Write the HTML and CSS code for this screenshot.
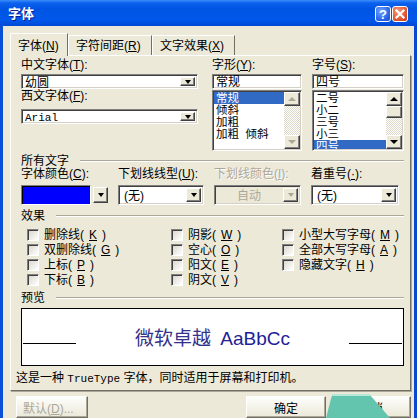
FILE: index.html
```html
<!DOCTYPE html>
<html lang="zh-CN">
<head>
  <meta charset="UTF-8">
  <title>字体</title>
  <link rel="stylesheet" href="styles.css">
</head>
<body>

  <div class="window">
    <!-- 标题栏 -->
    <div class="titlebar">
      <span class="title">字体</span>
      <span class="tbtn help">?</span>
      <span class="tbtn close">
        <svg width="14" height="14" viewBox="0 0 14 14"><path d="M3.5 3.5 L10.5 10.5 M10.5 3.5 L3.5 10.5" stroke="#fff" stroke-width="2.2" stroke-linecap="square"/></svg>
      </span>
    </div>

    <div class="frame">
      <div class="client">
        <div class="tabs">
          <div class="tab active">字体(<u>N</u>)</div>
          <div class="tab">字符间距(<u>R</u>)</div>
          <div class="tab">文字效果(<u>X</u>)</div>
        </div>

        <div class="sheet">
          <div class="top-grid">
            <div class="col">
              <div class="lbl">中文字体(<u>T</u>):</div>
              <div class="combo small"><span class="val">幼圆</span><i class="drop"></i></div>
              <div class="lbl l2">西文字体(<u>F</u>):</div>
              <div class="combo small west"><span class="val mono">Arial</span><i class="drop"></i></div>
            </div>
            <div class="col">
              <div class="lbl">字形(<u>Y</u>):</div>
              <div class="edit">常规</div>
              <div class="listbox">
                <ul>
                  <li class="sel">常规</li>
                  <li>倾斜</li>
                  <li>加粗</li>
                  <li>加粗&nbsp; 倾斜</li>
                </ul>
                <div class="vscroll off">
                  <span class="sbtn up"></span>
                  <span class="track"></span>
                  <span class="sbtn down"></span>
                </div>
              </div>
            </div>
            <div class="col">
              <div class="lbl">字号(<u>S</u>):</div>
              <div class="edit">四号</div>
              <div class="listbox">
                <ul>
                  <li>二号</li>
                  <li>小二</li>
                  <li>三号</li>
                  <li>小三</li>
                  <li class="sel">四号</li>
                </ul>
                <div class="vscroll">
                  <span class="sbtn up"></span>
                  <span class="thumb"></span>
                  <span class="track"></span>
                  <span class="sbtn down"></span>
                </div>
              </div>
            </div>
          </div>

          <div class="group">所有文字</div>
          <div class="row4">
            <div class="lbl">字体颜色(<u>C</u>):</div>
            <div class="lbl">下划线线型(<u>U</u>):</div>
            <div class="lbl dis">下划线颜色(<u>I</u>):</div>
            <div class="lbl">着重号(<u>·</u>):</div>

            <div class="colorpick"><span class="swatch"></span><i class="drop"></i></div>
            <div class="combo big"><span class="val">(无)</span><i class="drop"></i></div>
            <div class="combo big disabled"><span class="val">自动</span><i class="drop"></i></div>
            <div class="combo big"><span class="val">(无)</span><i class="drop"></i></div>
          </div>

          <div class="group g2">效果</div>
          <div class="checks">
            <label class="chk"><i class="box"></i>删除线(<u>K</u>)</label>
            <label class="chk"><i class="box"></i>双删除线(<u>G</u>)</label>
            <label class="chk"><i class="box"></i>上标(<u>P</u>)</label>
            <label class="chk"><i class="box"></i>下标(<u>B</u>)</label>
            <label class="chk"><i class="box"></i>阴影(<u>W</u>)</label>
            <label class="chk"><i class="box"></i>空心(<u>O</u>)</label>
            <label class="chk"><i class="box"></i>阳文(<u>E</u>)</label>
            <label class="chk"><i class="box"></i>阴文(<u>V</u>)</label>
            <label class="chk"><i class="box"></i>小型大写字母(<u>M</u>)</label>
            <label class="chk"><i class="box"></i>全部大写字母(<u>A</u>)</label>
            <label class="chk"><i class="box"></i>隐藏文字(<u>H</u>)</label>
          </div>

          <div class="group g2">预览</div>
          <div class="preview">
            <span class="pline"></span>
            <span class="ptext"><span class="cn">微软卓越</span> <span class="en">AaBbCc</span></span>
            <span class="pline"></span>
          </div>

          <div class="note">这是一种 <span class="mono">TrueType</span> 字体，同时适用于屏幕和打印机。</div>
        </div>

        <div class="buttons">
          <button class="btn dflt" disabled>默认(<u>D</u>)...</button>
          <button class="btn ok">确定</button>
          <button class="btn">取消</button>
        </div>
      </div>
    </div>

    <!-- 右下角的水印 -->
    <svg class="mark" width="70" height="25" viewBox="0 0 70 25">
      <polygon points="6,2 44,2 64,25 0,25" fill="#63c5ae"/>
      <path d="M6 2 L44 2" stroke="#b9e6da" stroke-width="2"/>
    </svg>
  </div>

</body>
</html>
```

FILE: styles.css
```css
* { margin: 0; padding: 0; box-sizing: border-box; }

body {
  width: 417px;
  height: 418px;
  overflow: hidden;
  background: #0a4cd6;
  font-family: "Liberation Sans", "Noto Sans CJK SC", sans-serif;
  font-size: 12px;
  line-height: 12px;
  color: #000;
  text-autospace: no-autospace;
}

u { text-decoration: underline; text-underline-offset: 1px; }

.mono { font-family: "Liberation Mono", "Noto Sans CJK SC", monospace; font-size: 11px; }

.window {
  position: relative;
  width: 417px;
  height: 418px;
  display: flex;
  flex-direction: column;
}

/* 标题栏 */
.titlebar {
  height: 28px;
  display: flex;
  align-items: center;
  gap: 1px;
  padding: 2px 9px 0 8px;
  background: linear-gradient(#3d8ef8 0, #0b61ee 3px, #0054e3 9px, #0058ea 20px, #0048d6 26px, #003cb5 28px);
}

.title {
  flex: 1;
  color: #fff;
  font-size: 13px;
  font-weight: bold;
  text-shadow: 1px 1px #0a1e8a;
}

.tbtn {
  width: 16px;
  height: 16px;
  border: 1px solid #fff;
  border-radius: 3px;
  display: flex;
  align-items: center;
  justify-content: center;
  color: #fff;
  font: bold 13px "Liberation Sans", sans-serif;
}

.help { background: radial-gradient(circle at 35% 30%, #6fa4ff, #2260e6 70%, #1a4fc8); }
.close { background: radial-gradient(circle at 35% 30%, #f49a7c, #e0532b 65%, #c2391a); }

.frame {
  flex: 1;
  display: flex;
  border-left: 3px solid #0a4fd8;
  border-right: 7px solid #0b47cf;
}

.client {
  flex: 1;
  background: #ece9d8;
  padding: 7px 3px 0 7px;
  display: flex;
  flex-direction: column;
}

/* 选项卡 */
.tabs {
  display: flex;
  align-items: flex-end;
  height: 22px;
  position: relative;
  z-index: 1;
}

.tab {
  height: 20px;
  padding: 4px 7px 0;
  border: 1px solid;
  border-color: #fff #716f64 transparent #fff;
  border-bottom: none;
  background: #ece9d8;
  white-space: nowrap;
}

.tab:nth-child(2) { width: 84px; }
.tab:nth-child(3) { width: 83px; }

.tab.active {
  width: 58px;
  height: 23px;
  margin-bottom: -1px;
  padding-top: 6px;
}

.sheet {
  height: 336px;
  border: 1px solid;
  border-color: #fff #716f64 #716f64 #fff;
  box-shadow: 1px 1px 0 #aca899;
  padding: 0 6px 0 10px;
}

.lbl { height: 12px; white-space: nowrap; }
.lbl.dis { color: #aca899; text-shadow: 1px 1px #fff; }

.top-grid {
  display: grid;
  grid-template-columns: 177px 90px 88px;
  column-gap: 14px;
  padding-top: 3px;
}
.top-grid .col:last-child { margin-left: -4px; }

.top-grid .lbl { margin-bottom: 3px; }
.top-grid .l2 { margin: 1px 0 7px; }

/* 输入框与下拉框 */
.edit, .combo, .listbox, .colorpick .swatch {
  border: 1px solid;
  border-color: #808080 #fff #fff #808080;
  box-shadow: inset 1px 1px 0 #404040, inset -1px -1px 0 #d4d0c8;
  background: #fff;
}

.edit { height: 15px; padding: 1px 3px; }

.combo {
  display: flex;
  align-items: stretch;
  padding: 1px;
}
.combo .val { flex: 1; padding: 1px 2px 0; }
.combo.small { height: 15px; }
.combo.big { height: 20px; }
.combo.big .val { padding: 3px 4px 0; }
.combo.west .val { padding-top: 1px; }

.drop {
  width: 15px;
  margin: 1px;
  display: flex;
  align-items: center;
  justify-content: center;
  background: #ece9d8;
  border: 1px solid;
  border-color: #fff #404040 #404040 #fff;
  box-shadow: inset -1px -1px 0 #808080;
}
.drop::after {
  content: "";
  border-top: 4px solid #000;
  border-left: 3.5px solid transparent;
  border-right: 3.5px solid transparent;
}

.combo.disabled { background: #ece9d8; }
.combo.disabled .val { color: #aca899; text-align: center; }
.combo.disabled .drop::after { border-top-color: #aca899; }

.colorpick { display: flex; height: 20px; gap: 2px; }
.colorpick .swatch {
  flex: 1;
  background: #0000ff;
  box-shadow: inset 1px 1px 0 #000;
}
.colorpick .drop { margin: 2px 0; width: 15px; }

/* 列表框 */
.listbox {
  margin-top: 1px;
  height: 61px;
  display: flex;
  padding: 1px;
}
.listbox ul { flex: 1; list-style: none; overflow: hidden; }
.listbox li { height: 12px; padding-left: 2px; font-size: 11.5px; white-space: nowrap; }
.listbox li.sel { background: #316ac5; color: #fff; }

.vscroll {
  width: 16px;
  display: flex;
  flex-direction: column;
}
.sbtn {
  height: 14px;
  display: flex;
  align-items: center;
  justify-content: center;
  background: #ece9d8;
  border: 1px solid;
  border-color: #fff #404040 #404040 #fff;
  box-shadow: inset -1px -1px 0 #808080;
}
.sbtn.up::after {
  content: "";
  border-bottom: 4px solid #000;
  border-left: 4px solid transparent;
  border-right: 4px solid transparent;
}
.sbtn.down::after {
  content: "";
  border-top: 4px solid #000;
  border-left: 4px solid transparent;
  border-right: 4px solid transparent;
}
.vscroll.off .sbtn::after { border-top-color: #aca899; border-bottom-color: #aca899; }

.track {
  flex: 1;
  background: repeating-conic-gradient(#fff 0 25%, #dcd9c9 0 50%) 0 0 / 2px 2px;
}
.thumb {
  height: 12px;
  background: #ece9d8;
  border: 1px solid;
  border-color: #fff #404040 #404040 #fff;
  box-shadow: inset -1px -1px 0 #808080;
}

/* 分组标题 */
.group {
  display: flex;
  align-items: center;
  height: 12px;
  margin-top: 4px;
}
.group::after {
  content: "";
  flex: 1;
  margin-left: 11px;
  border-top: 1px solid #aca899;
  border-bottom: 1px solid #fff;
}
.group.g2 { margin-top: 5px; }

.row4 {
  display: grid;
  grid-template-columns: 87px 86px 87px 88px;
  column-gap: 10px;
  row-gap: 5px;
  margin-top: 1px;
}

/* 效果复选框 */
.checks {
  display: grid;
  grid-template-columns: 144px 111px auto;
  grid-template-rows: repeat(4, 15px);
  grid-auto-flow: column;
  padding-left: 6px;
  margin-top: 5px;
}
.chk { display: flex; align-items: center; gap: 5px; white-space: nowrap; }
.box {
  width: 12px;
  height: 12px;
  border: 1px solid;
  border-color: #808080 #fff #fff #808080;
  box-shadow: inset 1px 1px 0 #404040;
  background: linear-gradient(135deg, #d8d5c8, #fff);
}

/* 预览 */
.g2 + .preview { margin-top: 4px; }
.preview {
  height: 58px;
  border: 1px solid #000;
  background: #fff;
  display: flex;
  align-items: center;
  justify-content: space-between;
  padding: 0 1px;
}
.pline { width: 53px; margin-top: 13px; border-top: 1px solid #000; }
.ptext { font-size: 19px; line-height: 19px; white-space: nowrap; }
.ptext .cn { color: #33338c; font-family: "Noto Sans CJK SC", sans-serif; }
.ptext .en { color: #1f2296; margin-left: 4px; }

.note { margin-top: 6px; margin-left: -5px; white-space: nowrap; }

/* 底部按钮 */
.buttons {
  display: flex;
  gap: 5px;
  margin-top: 5px;
  padding-left: 6px;
}
.btn {
  height: 22px;
  width: 80px;
  font-family: inherit;
  font-size: 12px;
  background: linear-gradient(#fdfdfb, #ece9d8);
  border: 1px solid;
  border-color: #fff #716f64 #716f64 #fff;
  box-shadow: inset -1px -1px 0 #aca899;
}
.btn.dflt { width: 72px; color: #aca899; text-align: left; padding-left: 6px; }
.btn.ok { margin-left: auto; }

.mark { position: absolute; left: 326px; top: 393px; }
```
